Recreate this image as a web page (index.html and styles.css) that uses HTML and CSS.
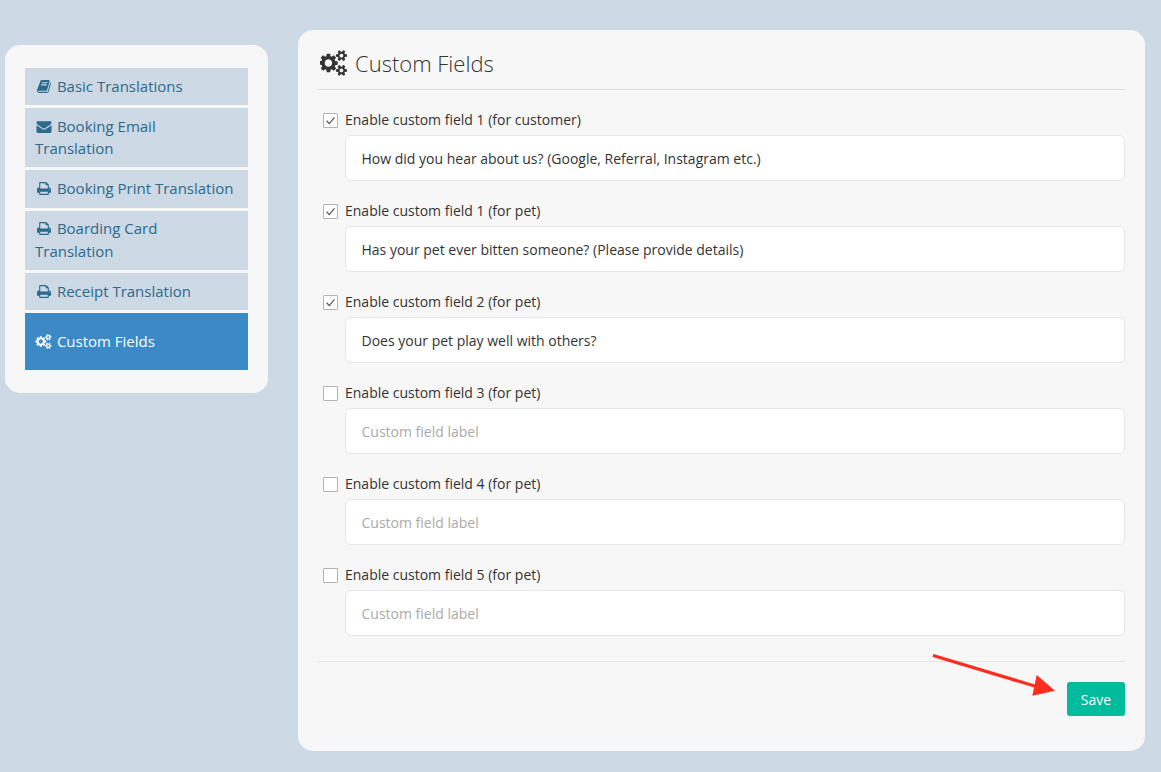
FILE: index.html
```html
<!DOCTYPE html>
<html lang="en">
<head>
<meta charset="utf-8">
<title>Custom Fields</title>
<link rel="stylesheet" href="styles.css">
</head>
<body>
<svg class="defs" width="0" height="0" aria-hidden="true">
  <symbol id="i-book" viewBox="0 0 1792 1792"><path d="M1703 478q40 57 18 129l-275 906q-19 64-76.500 107.500t-122.500 43.500h-923q-77 0-148.500-53.500t-99.500-131.500q-24-67-2-127 0-4 3-27t4-37q1-8-3-21.500t-3-19.500q2-11 8-21t16.500-23.500 16.500-23.500q23-38 45-91.500t30-91.500q3-10 .5-30t-.5-28q3-11 17-28t17-23q21-36 42-92t25-90q1-9-2.500-32t.5-28q4-13 22-30.500t22-22.500q19-26 42.500-84.500t27.500-96.500q1-8-3-25.500t-2-26.500q2-8 9-18t18-23 17-21q8-12 16.500-30.500t15-35 16-36 19.500-32 26.500-23.500 36-11.500 47.500 5.500l-1 3q38-9 51-9h761q74 0 114 56t18 130l-274 906q-36 119-71.500 153.500t-128.500 34.500h-869q-27 0-38 15-11 16-1 43 24 70 144 70h923q29 0 56-15.500t35-41.500l300-987q7-22 5-57 38 15 59 43zm-1064 2q-4 13 2 22.500t20 9.500h608q13 0 25.500-9.500t16.500-22.500l21-64q4-13-2-22.500t-20-9.500h-608q-13 0-25.500 9.500t-16.500 22.500zm-83 256q-4 13 2 22.500t20 9.500h608q13 0 25.500-9.500t16.500-22.500l21-64q4-13-2-22.500t-20-9.500h-608q-13 0-25.500 9.500t-16.500 22.500z"/></symbol>
  <symbol id="i-mail" viewBox="0 0 1792 1792"><path d="M1792 710v794q0 66-47 113t-113 47h-1472q-66 0-113-47t-47-113v-794q44 49 101 87 362 246 497 345 57 42 92.500 65.500t94.500 48 110 24.500h2q51 0 110-24.500t94.500-48 92.500-65.500q170-123 498-345 57-39 100-87zm0-294q0 79-49 151t-122 123q-376 261-468 325-10 7-42.500 30.500t-54 38-52 32.500-57.500 27-50 9h-2q-23 0-50-9t-57.500-27-52-32.500-54-38-42.500-30.500q-91-64-262-182.500t-205-142.500q-62-42-117-115.500t-55-136.500q0-78 41.500-130t118.500-52h1472q65 0 112.500 47t47.500 113z"/></symbol>
  <symbol id="i-print" viewBox="0 0 1792 1792"><path d="M448 1536h896v-256h-896v256zm0-640h896v-384h-160q-40 0-68-28t-28-68v-160h-640v640zm1152 64q0-26-19-45t-45-19-45 19-19 45 19 45 45 19 45-19 19-45zm128 0v416q0 13-9.500 22.500t-22.500 9.500h-224v160q0 40-28 68t-68 28h-960q-40 0-68-28t-28-68v-160h-224q-13 0-22.500-9.500t-9.500-22.500v-416q0-79 56.500-135.500t135.500-56.500h64v-544q0-40 28-68t68-28h672q40 0 88 20t76 48l152 152q28 28 48 76t20 88v256h64q79 0 135.500 56.500t56.500 135.500z"/></symbol>
  <symbol id="i-cogs" viewBox="0 0 1920 1792"><path d="M832 896q0-106-75-181t-181-75-181 75-75 181 75 181 181 75 181-75 75-181zm768 512q0-52-38-90t-90-38-90 38-38 90q0 53 37.500 90.500t90.500 37.500 90.500-37.500 37.500-90.500zm0-1024q0-52-38-90t-90-38-90 38-38 90q0 53 37.500 90.500t90.500 37.500 90.500-37.500 37.500-90.500zm-384 421v185q0 10-7 19.500t-16 10.500l-155 24q-11 35-32 76 34 48 90 115 7 11 7 20 0 12-7 19-23 30-82.500 89.500t-78.500 59.500q-11 0-21-7l-115-90q-37 19-77 31-11 108-23 155-7 24-30 24h-186q-11 0-20-7.500t-10-17.500l-23-153q-34-10-75-31l-118 89q-7 7-20 7-11 0-21-8-144-133-144-160 0-9 7-19 10-14 41-53t47-61q-23-44-35-82l-152-24q-10-1-17-9.500t-7-19.500v-185q0-10 7-19.500t16-10.500l155-24q11-35 32-76-34-48-90-115-7-11-7-20 0-12 7-20 22-30 82-89t79-59q11 0 21 7l115 90q34-18 77-32 11-108 23-154 7-24 30-24h186q11 0 20 7.500t10 17.500l23 153q34 10 75 31l118-89q8-7 20-7 11 0 21 8 144 133 144 160 0 8-7 19-12 16-42 54t-45 60q23 48 34 82l152 23q10 2 17 10.500t7 19.500zm640 533v140q0 16-149 31-12 27-30 52 51 113 51 138 0 4-4 7-122 71-124 71-8 0-46-47t-52-68q-20 2-30 2t-30-2q-14 21-52 68t-46 47q-2 0-124-71-4-3-4-7 0-25 51-138-18-25-30-52-149-15-149-31v-140q0-16 149-31 13-29 30-52-51-113-51-138 0-4 4-7 4-2 35-20t59-34 30-16q8 0 46 46.500t52 67.500q20-2 30-2t30 2q51-71 92-112l6-2q4 0 124 70 4 3 4 7 0 25-51 138 17 23 30 52 149 15 149 31zm0-1024v140q0 16-149 31-12 27-30 52 51 113 51 138 0 4-4 7-122 71-124 71-8 0-46-47t-52-68q-20 2-30 2t-30-2q-14 21-52 68t-46 47q-2 0-124-71-4-3-4-7 0-25 51-138-18-25-30-52-149-15-149-31v-140q0-16 149-31 13-29 30-52-51-113-51-138 0-4 4-7 4-2 35-20t59-34 30-16q8 0 46 46.500t52 67.500q20-2 30-2t30 2q51-71 92-112l6-2q4 0 124 70 4 3 4 7 0 25-51 138 17 23 30 52 149 15 149 31z"/></symbol>
  <symbol id="i-check" viewBox="0 0 14 14"><path d="M2.800 7.300 L5.700 10.300 L11.300 3.700" fill="none" stroke="currentColor" stroke-width="1.300"/></symbol>
</svg>
<div class="page">
  <aside class="sidebar">
    <nav class="nav">
      <a class="nav-item"><svg class="ico"><use href="#i-book"/></svg> Basic Translations</a>
      <a class="nav-item"><svg class="ico"><use href="#i-mail"/></svg> Booking Email Translation</a>
      <a class="nav-item"><svg class="ico"><use href="#i-print"/></svg> Booking Print Translation</a>
      <a class="nav-item"><svg class="ico"><use href="#i-print"/></svg> Boarding Card Translation</a>
      <a class="nav-item"><svg class="ico"><use href="#i-print"/></svg> Receipt Translation</a>
      <a class="nav-item active"><svg class="ico"><use href="#i-cogs"/></svg> Custom Fields</a>
    </nav>
  </aside>
  <main class="card">
    <h1 class="title"><svg class="title-ico"><use href="#i-cogs"/></svg>Custom Fields</h1>
    <div class="fields">
      <div class="field">
        <label class="check"><span class="box"><svg class="tick"><use href="#i-check"/></svg></span>Enable custom field 1 (for customer)</label>
        <input class="text" type="text" value="How did you hear about us? (Google, Referral, Instagram etc.)">
      </div>
      <div class="field">
        <label class="check"><span class="box"><svg class="tick"><use href="#i-check"/></svg></span>Enable custom field 1 (for pet)</label>
        <input class="text" type="text" value="Has your pet ever bitten someone? (Please provide details)">
      </div>
      <div class="field">
        <label class="check"><span class="box"><svg class="tick"><use href="#i-check"/></svg></span>Enable custom field 2 (for pet)</label>
        <input class="text" type="text" value="Does your pet play well with others?">
      </div>
      <div class="field">
        <label class="check"><span class="box"></span>Enable custom field 3 (for pet)</label>
        <input class="text" type="text" placeholder="Custom field label">
      </div>
      <div class="field">
        <label class="check"><span class="box"></span>Enable custom field 4 (for pet)</label>
        <input class="text" type="text" placeholder="Custom field label">
      </div>
      <div class="field">
        <label class="check"><span class="box"></span>Enable custom field 5 (for pet)</label>
        <input class="text" type="text" placeholder="Custom field label">
      </div>
    </div>
    <div class="actions">
      <button class="save" type="button">Save</button>
    </div>
    <svg class="arrow" width="130" height="46" viewBox="0 0 130 46" aria-hidden="true">
      <path d="M1 1.500 L106 33" fill="none" stroke="#ff2d20" stroke-width="3.200"/>
      <path d="M104.700 21 L123 36.700 L100.300 41.700 Z" fill="#ff2d20"/>
    </svg>
  </main>
</div>
</body>
</html>
```

FILE: styles.css
```css
* { box-sizing: border-box; }
html, body { margin: 0; height: 100%; }
body {
  background: #cdd9e4;
  font-family: "Open Sans", sans-serif;
  color: #333;
  overflow: hidden;
}
.defs { position: absolute; }
.page {
  display: flex;
  align-items: flex-start;
  gap: 30px;
  padding: 30px 16px 0 5px;
}
.sidebar {
  width: 263px;
  flex: none;
  margin-top: 15px;
  padding: 23px 20px;
  background: #f7f7f7;
  border-radius: 15px;
}
.nav { display: flex; flex-direction: column; gap: 3px; }
.nav-item {
  display: block;
  padding: 6.900px 10px 8.100px;
  background: #cdd9e5;
  color: #2b6a8c;
  font-size: 15px;
  line-height: 22.150px;
}
.nav-item.active {
  background: #3c89c7;
  color: #fff;
  padding-top: 16.500px;
  padding-bottom: 18.500px;
}
.ico {
  display: inline-block;
  width: 18px;
  height: 15px;
  fill: currentColor;
  vertical-align: -2px;
}
.card {
  position: relative;
  flex: 1;
  height: 721px;
  padding: 0 20px;
  background: #f7f7f7;
  border-radius: 15px;
}
.title {
  display: flex;
  align-items: center;
  height: 60px;
  margin: 0;
  padding: 6px 0 0 2px;
  border-bottom: 1px solid #dedede;
  font-size: 22px;
  font-weight: 300;
  color: #333;
}
.title-ico {
  width: 28px;
  height: 26px;
  margin-right: 7px;
  fill: #333;
}
.fields { display: flex; flex-direction: column; padding-top: 19px; gap: 19px; }
.field { display: flex; flex-direction: column; }
.check {
  display: flex;
  align-items: center;
  height: 20px;
  margin-bottom: 6px;
  padding-left: 5px;
  font-size: 14px;
  color: #333;
}
.box {
  display: flex;
  flex: none;
  width: 15px;
  height: 15px;
  margin: 3px 7px 0 0;
  background: #fff;
  border: 1px solid #b3b3b3;
  border-radius: 1px;
}
.tick { width: 13px; height: 13px; color: #555; }
.text {
  display: block;
  width: 780px;
  height: 46px;
  margin-left: 27px;
  padding: 0 15.500px;
  background: #fff;
  border: 1px solid #e6e6e6;
  border-radius: 6px;
  font: 14px "Open Sans", sans-serif;
  color: #333;
  outline: none;
}
.text::placeholder { color: #aaa; opacity: 1; }
.actions {
  display: flex;
  justify-content: flex-end;
  margin-top: 25px;
  padding-top: 20px;
  border-top: 1px solid #e4e4e4;
}
.save {
  width: 58px;
  height: 34px;
  padding: 0;
  background: #00bb9c;
  border: 0;
  border-radius: 3px;
  color: #fff;
  font: 400 14px "Open Sans", sans-serif;
}
.arrow { position: absolute; left: 634px; top: 624px; }
```
